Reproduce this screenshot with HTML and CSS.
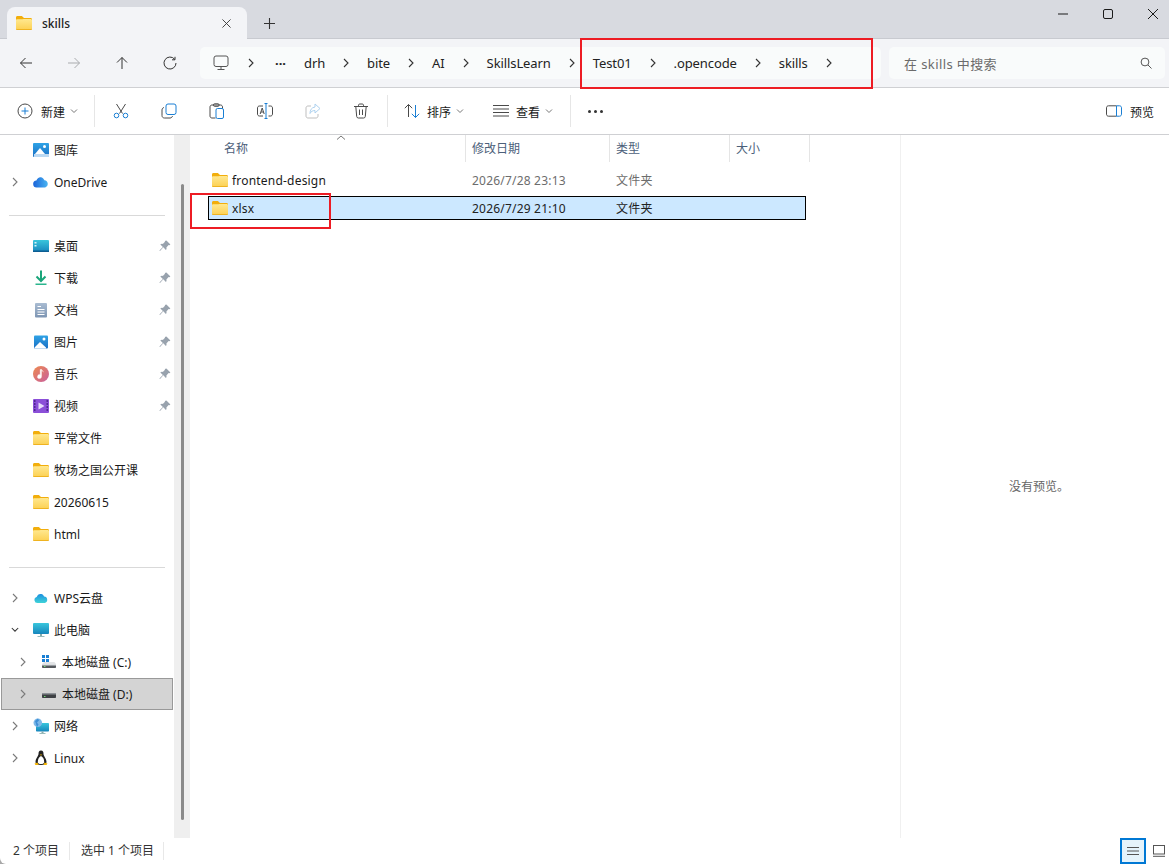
FILE: index.html
```html
<!DOCTYPE html>
<html lang="zh-CN">
<head>
    <meta charset="UTF-8">
    <title>skills</title>
    <link rel="stylesheet" href="styles.css">
</head>
<body>
    <!-- Shared icons -->
    <svg class="svg-defs" aria-hidden="true">
        <defs>
            <linearGradient id="folderFront" x1="0" y1="0" x2="0" y2="1">
                <stop offset="0" stop-color="#ffe88f"/>
                <stop offset="1" stop-color="#fcd052"/>
            </linearGradient>
            <linearGradient id="blueTile" x1="0" y1="0" x2="0" y2="1">
                <stop offset="0" stop-color="#2fa3e6"/>
                <stop offset="1" stop-color="#1a6fc4"/>
            </linearGradient>
            <linearGradient id="tealTile" x1="0" y1="0" x2="0" y2="1">
                <stop offset="0" stop-color="#39c6dc"/>
                <stop offset="1" stop-color="#1786bd"/>
            </linearGradient>
            <linearGradient id="musicTile" x1="0" y1="0" x2="1" y2="1">
                <stop offset="0" stop-color="#ee8a4e"/>
                <stop offset="1" stop-color="#c85f9e"/>
            </linearGradient>
            <linearGradient id="docTile" x1="0" y1="0" x2="0" y2="1">
                <stop offset="0" stop-color="#a9bcd2"/>
                <stop offset="1" stop-color="#7d95b3"/>
            </linearGradient>
            <linearGradient id="cloudBlue" x1="0" y1="0" x2="1" y2="0">
                <stop offset="0" stop-color="#1a63d8"/>
                <stop offset="1" stop-color="#49b4f2"/>
            </linearGradient>
            <linearGradient id="cloudWps" x1="0" y1="0" x2="0" y2="1">
                <stop offset="0" stop-color="#1c8fe0"/>
                <stop offset="1" stop-color="#3fd3d8"/>
            </linearGradient>
        </defs>
        <symbol id="folder" viewBox="0 0 16 14">
            <path d="M0 1.5C0 .7.6 0 1.4 0h4c.4 0 .7.1 1 .4L8 2h6.6c.8 0 1.4.6 1.4 1.4V6H0z" fill="#f2ae0c"/>
            <path d="M0 4.2c0-.5.4-.9.9-.9h5.3L7.6 3h7c.8 0 1.4.6 1.4 1.4v8.2c0 .8-.6 1.4-1.4 1.4H1.4C.6 14 0 13.4 0 12.6z" fill="url(#folderFront)"/>
            <path d="M0 12.4c0 .9.6 1.6 1.4 1.6h13.2c.8 0 1.4-.7 1.4-1.6v-.2c0 .6-.6 1-1.4 1H1.4c-.8 0-1.4-.4-1.4-1z" fill="#eaa90f"/>
        </symbol>
        <symbol id="chev-right" viewBox="0 0 8 10">
            <path d="M2 1l4 4-4 4" fill="none" stroke="currentColor" stroke-width="1.1"/>
        </symbol>
        <symbol id="chev-small" viewBox="0 0 8 6">
            <path d="M1 1.5L4 4.5 7 1.5" fill="none" stroke="currentColor" stroke-width="1"/>
        </symbol>
        <symbol id="pin" viewBox="0 0 12 12">
            <path d="M7.4.6l4 4-1 .7-.8-.2-2.2 2.3c.3 1 .1 1.9-.5 2.5L4.300 7.300 1 11l-.6-.4 3.500-3.500L1.300 4.500c.6-.6 1.500-.8 2.500-.5L6 1.800l-.2-.8z" fill="#98a2ad"/>
        </symbol>
    </svg>

    <div class="window">
        <!-- Tabs -->
        <header class="title-bar">
            <div class="tab">
                <svg class="folder-icon"><use href="#folder"/></svg>
                <span class="tab-title">skills</span>
                <svg class="tab-close" viewBox="0 0 10 10"><path d="M.5.5l9 9M9.500.5l-9 9"/></svg>
            </div>
            <svg class="tab-add" viewBox="0 0 10 10"><path d="M5 0v10M0 5h10"/></svg>
            <div class="window-controls">
                <svg viewBox="0 0 10 10"><path d="M0 5h10"/></svg>
                <svg viewBox="0 0 10 10"><rect x=".5" y=".5" width="9" height="9" rx="1.500"/></svg>
                <svg viewBox="0 0 10 10"><path d="M0 0l10 10M10 0L0 10"/></svg>
            </div>
        </header>

        <!-- Address row -->
        <div class="address-row">
            <div class="nav-buttons">
                <button class="nav-btn"><svg viewBox="0 0 14 14"><path d="M13 7H1.500M6.500 2L1.500 7l5 5"/></svg></button>
                <button class="nav-btn disabled"><svg viewBox="0 0 14 14"><path d="M1 7h11.500M7.500 2l5 5-5 5"/></svg></button>
                <button class="nav-btn"><svg viewBox="0 0 14 14"><path d="M7 13V1.500M2 6.500l5-5 5 5"/></svg></button>
                <button class="nav-btn"><svg viewBox="0 0 14 14"><path d="M11.700 3.300A6 6 0 1 0 13 7M12 .8v3H9"/></svg></button>
            </div>
            <nav class="address-box">
                <svg class="crumb-pc" viewBox="0 0 16 16"><rect x="1" y="1" width="14" height="10.500" rx="2"/><path d="M8 11.500v3M4.500 14.500h7"/></svg>
                <svg class="crumb-sep first"><use href="#chev-right"/></svg>
                <span class="crumb-more">···</span>
                <span class="crumb first-crumb">drh</span>
                <svg class="crumb-sep"><use href="#chev-right"/></svg>
                <span class="crumb">bite</span>
                <svg class="crumb-sep"><use href="#chev-right"/></svg>
                <span class="crumb">AI</span>
                <svg class="crumb-sep"><use href="#chev-right"/></svg>
                <span class="crumb">SkillsLearn</span>
                <svg class="crumb-sep"><use href="#chev-right"/></svg>
                <span class="crumb">Test01</span>
                <svg class="crumb-sep"><use href="#chev-right"/></svg>
                <span class="crumb">.opencode</span>
                <svg class="crumb-sep"><use href="#chev-right"/></svg>
                <span class="crumb">skills</span>
                <svg class="crumb-sep"><use href="#chev-right"/></svg>
            </nav>
            <div class="search-box">
                <span>在 skills 中搜索</span>
                <svg viewBox="0 0 12 12"><circle cx="5" cy="5" r="3.900"/><path d="M8 8l3.500 3.500"/></svg>
            </div>
        </div>

        <!-- Command bar -->
        <div class="command-bar">
            <button class="cmd cmd-new">
                <svg class="cmd-icon" viewBox="0 0 16 16"><circle class="gray" cx="8" cy="8" r="7"/><path class="blue" d="M8 4.500v7M4.500 8h7"/></svg>
                <span>新建</span>
                <svg class="cmd-caret"><use href="#chev-small"/></svg>
            </button>
            <span class="cmd-sep"></span>
            <button class="cmd cmd-square"><svg class="cmd-icon" viewBox="0 0 16 16"><path class="gray" d="M3.500 1l6 9.500M12.500 1l-6 9.500"/><circle class="blue" cx="3.500" cy="12.500" r="2.300"/><circle class="blue" cx="12.500" cy="12.500" r="2.300"/></svg></button>
            <button class="cmd cmd-square"><svg class="cmd-icon" viewBox="0 0 16 16"><path class="gray" d="M3 4.500C1.800 4.800 1 5.600 1 7v5.500C1 14 2 15 3.500 15H9c1.300 0 2.200-.8 2.500-2"/><rect class="blue" x="5" y="1" width="10" height="10.500" rx="2"/></svg></button>
            <button class="cmd cmd-square"><svg class="cmd-icon" viewBox="0 0 16 16"><path class="gray" d="M6.500 15H3c-1.200 0-2-.8-2-2V4c0-1.200.8-2 2-2h8.500c1.200 0 2 .8 2 2v1.500"/><rect class="gray" x="4.500" y=".8" width="5.500" height="2.500" rx="1"/><rect class="blue" x="7" y="5.500" width="7.500" height="10" rx="1.500"/></svg></button>
            <button class="cmd cmd-square"><svg class="cmd-icon" viewBox="0 0 16 16"><path class="gray" d="M6 3H2.500C1.300 3 .5 3.800 .5 5v6c0 1.200.8 2 2 2H6M11.500 3h2c1.200 0 2 .8 2 2v6c0 1.200-.8 2-2 2h-2"/><path class="blue" d="M7.500.5h3M9 .5v15M7.500 15.500h3"/><path class="gray" d="M3.200 11l2-6 2 6M3.900 9h2.600"/></svg></button>
            <button class="cmd cmd-square"><svg class="cmd-icon faded" viewBox="0 0 16 16"><path class="gray" d="M6 3H3c-1.200 0-2 .8-2 2v8c0 1.200.8 2 2 2h8c1.200 0 2-.8 2-2v-2"/><path class="blue" d="M10 1l5 4.500-5 4.500V7.500c-2.500 0-4 1-5 3 0-3.500 1.500-6 5-6.500z"/></svg></button>
            <button class="cmd cmd-square"><svg class="cmd-icon" viewBox="0 0 16 16"><path class="gray" d="M1 3.500h14M5.500 3.500V2.200c0-.7.5-1.200 1.200-1.200h2.600c.7 0 1.200.5 1.200 1.200v1.300M2.800 3.500l.9 10c.1.900.7 1.500 1.600 1.500h5.400c.9 0 1.500-.6 1.600-1.500l.9-10M6.500 6.500v5.500M9.500 6.500v5.500"/></svg></button>
            <span class="cmd-sep sep-after-delete"></span>
            <button class="cmd cmd-sort">
                <svg class="cmd-icon" viewBox="0 0 16 16"><path class="gray" d="M4.500 14V1.500M.8 5.200l3.700-3.700 3.700 3.700"/><path class="blue" d="M11.500 2v12.500M7.800 10.800l3.700 3.700 3.700-3.700"/></svg>
                <span>排序</span>
                <svg class="cmd-caret"><use href="#chev-small"/></svg>
            </button>
            <button class="cmd cmd-view">
                <svg class="cmd-icon" viewBox="0 0 16 16"><path class="gray" d="M0 2.500h16M0 6h16M0 9.500h16M0 13h16"/></svg>
                <span>查看</span>
                <svg class="cmd-caret"><use href="#chev-small"/></svg>
            </button>
            <span class="cmd-sep"></span>
            <button class="cmd cmd-more"><i></i><i></i><i></i></button>
            <button class="cmd cmd-preview">
                <svg class="cmd-icon" viewBox="0 0 16 12"><path class="gray" d="M10.500.8H2.500C1.300.8.500 1.600.500 2.800v6.400c0 1.200.8 2 2 2h8"/><path class="blue" d="M10.500.8h3c1.200 0 2 .8 2 2v6.400c0 1.200-.8 2-2 2h-3z"/></svg>
                <span>预览</span>
            </button>
        </div>

        <div class="content">
            <!-- Sidebar -->
            <aside class="sidebar">
                <ul class="tree">
                    <li class="tree-row">
                        <span class="twisty"></span>
                        <svg class="tree-icon" viewBox="0 0 16 16"><rect y="1" width="16" height="14" rx="1" fill="url(#blueTile)"/><circle cx="11.500" cy="4.500" r="1.500" fill="#fff"/><path d="M2 12l5-6 5 6z" fill="#fff"/><rect x="1" y="12" width="15" height="3" fill="#bcd9f2"/></svg>
                        <span>图库</span>
                    </li>
                    <li class="tree-row">
                        <svg class="twisty"><use href="#chev-right"/></svg>
                        <svg class="tree-icon" viewBox="0 0 16 16"><path d="M4 13.500a3.500 3.500 0 0 1-.6-7C4.300 4 6.500 2.500 8.800 3.500c1.300.5 2.200 1.600 2.600 2.800a3.700 3.700 0 0 1 .8 7.200z" fill="url(#cloudBlue)"/></svg>
                        <span>OneDrive</span>
                    </li>
                    <li class="tree-divider"></li>
                    <li class="tree-row">
                        <span class="twisty"></span>
                        <svg class="tree-icon" viewBox="0 0 16 16"><rect y="2" width="16" height="12" rx="1" fill="url(#tealTile)"/><rect x="1.500" y="4" width="2" height="1.500" fill="#d5f3fa"/><rect x="1.500" y="7" width="2" height="1.500" fill="#d5f3fa"/><rect y="12.500" width="16" height="1.500" fill="#0d5d92"/></svg>
                        <span>桌面</span>
                        <svg class="pin"><use href="#pin"/></svg>
                    </li>
                    <li class="tree-row">
                        <span class="twisty"></span>
                        <svg class="tree-icon" viewBox="0 0 16 16"><path d="M8 .5v10M3.500 6.500L8 11l4.500-4.500" fill="none" stroke="#1aa57a" stroke-width="2"/><rect x="2.500" y="13.500" width="11" height="1.500" fill="#2bb58d"/></svg>
                        <span>下载</span>
                        <svg class="pin"><use href="#pin"/></svg>
                    </li>
                    <li class="tree-row">
                        <span class="twisty"></span>
                        <svg class="tree-icon" viewBox="0 0 16 16"><rect x="2" y="1" width="12" height="14.500" rx="1" fill="url(#docTile)"/><path d="M4.500 4.500h3.500M4.500 7.500h7M4.500 10h7M4.500 12.500h7" stroke="#fff" stroke-width="1.100"/></svg>
                        <span>文档</span>
                        <svg class="pin"><use href="#pin"/></svg>
                    </li>
                    <li class="tree-row">
                        <span class="twisty"></span>
                        <svg class="tree-icon" viewBox="0 0 16 16"><rect x="1" y="1.500" width="14" height="13" rx="1" fill="url(#blueTile)"/><circle cx="11" cy="5" r="1.500" fill="#fff"/><path d="M1.500 13.500L7 8l6 5.500v1H2z" fill="#fff"/></svg>
                        <span>图片</span>
                        <svg class="pin"><use href="#pin"/></svg>
                    </li>
                    <li class="tree-row">
                        <span class="twisty"></span>
                        <svg class="tree-icon" viewBox="0 0 16 16"><circle cx="8" cy="8" r="8" fill="url(#musicTile)"/><path d="M8.500 3.500v7a2 2 0 1 1-1.300-1.800V3.500zM8.500 3.500c.3 1.500 1.500 2 2.300 2.500" fill="#fff" stroke="#fff" stroke-width=".4"/></svg>
                        <span>音乐</span>
                        <svg class="pin"><use href="#pin"/></svg>
                    </li>
                    <li class="tree-row">
                        <span class="twisty"></span>
                        <svg class="tree-icon" viewBox="0 0 16 16"><rect y="1" width="16" height="14" rx="1" fill="#8b4fd8"/><path d="M1 3h1.500M1 6h1.500M1 9h1.500M1 12h1.500M13.500 3H15M13.500 6H15M13.500 9H15M13.500 12H15" stroke="#3c1d78" stroke-width="1.300"/><path d="M5.500 4.500v7l6-3.500z" fill="#e6dbfa"/></svg>
                        <span>视频</span>
                        <svg class="pin"><use href="#pin"/></svg>
                    </li>
                    <li class="tree-row">
                        <span class="twisty"></span>
                        <svg class="tree-icon folder-small"><use href="#folder"/></svg>
                        <span>平常文件</span>
                    </li>
                    <li class="tree-row">
                        <span class="twisty"></span>
                        <svg class="tree-icon folder-small"><use href="#folder"/></svg>
                        <span>牧场之国公开课</span>
                    </li>
                    <li class="tree-row">
                        <span class="twisty"></span>
                        <svg class="tree-icon folder-small"><use href="#folder"/></svg>
                        <span>20260615</span>
                    </li>
                    <li class="tree-row">
                        <span class="twisty"></span>
                        <svg class="tree-icon folder-small"><use href="#folder"/></svg>
                        <span>html</span>
                    </li>
                    <li class="tree-divider"></li>
                    <li class="tree-row">
                        <svg class="twisty"><use href="#chev-right"/></svg>
                        <svg class="tree-icon" viewBox="0 0 16 16"><path d="M4.500 13a3 3 0 0 1-.8-5.900C4.300 4.800 6.200 3.500 8.300 4c1.400.3 2.400 1.300 2.800 2.500a3.300 3.300 0 0 1 .6 6.500z" fill="url(#cloudWps)"/></svg>
                        <span>WPS云盘</span>
                    </li>
                    <li class="tree-row">
                        <svg class="twisty open" viewBox="0 0 10 8"><path d="M1 1.500l4 4 4-4" fill="none" stroke="currentColor" stroke-width="1.300"/></svg>
                        <svg class="tree-icon" viewBox="0 0 16 16"><rect y="1" width="16" height="11" rx="1" fill="url(#tealTile)"/><rect x="7" y="12" width="2" height="2" fill="#8aa"/><rect x="4.500" y="14" width="7" height="1" fill="#9bb"/></svg>
                        <span>此电脑</span>
                    </li>
                    <li class="tree-row nested">
                        <svg class="twisty"><use href="#chev-right"/></svg>
                        <svg class="tree-icon" viewBox="0 0 16 16"><path d="M1 1h3v3H1zM5 1h3v3H5zM1 5h3v3H1zM5 5h3v3H5z" fill="#1a7fd4"/><path d="M1 9.500l2-1h10.500l1.500 1z" fill="#c8ccd0"/><rect x="1" y="10" width="14" height="4" rx=".8" fill="#55595e"/><rect x="1" y="10" width="14" height="1.500" fill="#dcdfe2"/><rect x="3" y="12" width="1.500" height="1" fill="#6fe06f"/></svg>
                        <span>本地磁盘 (C:)</span>
                    </li>
                    <li class="tree-row nested selected">
                        <svg class="twisty"><use href="#chev-right"/></svg>
                        <svg class="tree-icon" viewBox="0 0 16 16"><rect x="1" y="7" width="14" height="5" rx=".8" fill="#3d4044"/><rect x="1" y="7" width="14" height="1.500" fill="#8d9196"/><rect x="3" y="10" width="1.500" height="1" fill="#6fe06f"/></svg>
                        <span>本地磁盘 (D:)</span>
                    </li>
                    <li class="tree-row">
                        <svg class="twisty"><use href="#chev-right"/></svg>
                        <svg class="tree-icon" viewBox="0 0 16 16"><rect x="3" y="5" width="13" height="8.500" rx=".8" fill="url(#tealTile)"/><rect x="8.500" y="13.500" width="2" height="1.500" fill="#8aa"/><rect x="6.500" y="15" width="6" height="1" fill="#9bb"/><circle cx="4.800" cy="4.800" r="4.300" fill="#7db8e8"/><path d="M2 3c1.500-1 2-2 3-2.500l1 2-2 2 1.500 2L4 9" fill="#3f8fd6"/></svg>
                        <span>网络</span>
                    </li>
                    <li class="tree-row">
                        <svg class="twisty"><use href="#chev-right"/></svg>
                        <svg class="tree-icon" viewBox="0 0 16 16"><path d="M8 .5c2 0 2.500 1.500 2.500 3.500 0 2 3 4.500 3 8 0 2-2 3-5.500 3s-5.500-1-5.500-3c0-3.500 3-6 3-8 0-2 .5-3.500 2.500-3.500z" fill="#222"/><path d="M8 6c2 .8 3.200 3.500 3.200 6 0 1.500-1.300 2-3.200 2s-3.200-.5-3.200-2c0-2.500 1.200-5.200 3.200-6z" fill="#fff"/><path d="M6.800 4.500h2.400L8 5.800z" fill="#f4b400"/><path d="M1.500 13.500l3-1 1 2.500H2.500zM14.500 13.500l-3-1-1 2.500h3z" fill="#f4b400"/></svg>
                        <span>Linux</span>
                    </li>
                </ul>
            </aside>
            <div class="scroll-track"><div class="scroll-thumb"></div></div>

            <!-- File list -->
            <main class="file-pane">
                <div class="list-header">
                    <div class="col-head name-head">名称<svg class="sort-caret" viewBox="0 0 10 5"><path d="M1 4.500L5 1l4 3.500"/></svg></div>
                    <div class="col-head">修改日期</div>
                    <div class="col-head">类型</div>
                    <div class="col-head">大小</div>
                </div>
                <div class="file-list">
                    <div class="file-row">
                        <div class="file-name"><svg class="folder-icon"><use href="#folder"/></svg>frontend-design</div>
                        <div class="file-cell">2026/7/28 23:13</div>
                        <div class="file-cell">文件夹</div>
                    </div>
                    <div class="file-row active">
                        <div class="file-name"><svg class="folder-icon"><use href="#folder"/></svg>xlsx</div>
                        <div class="file-cell">2026/7/29 21:10</div>
                        <div class="file-cell">文件夹</div>
                    </div>
                </div>
            </main>

            <!-- Preview pane -->
            <section class="preview-pane">没有预览。</section>
        </div>

        <!-- Status bar -->
        <footer class="status-bar">
            <span class="status-item first-status">2 个项目</span>
            <span class="status-item">选中 1 个项目</span>
            <div class="view-switch">
                <button class="view-btn active"><svg viewBox="0 0 12 10"><path d="M0 1.500h12M0 5h12M0 8.500h12"/></svg></button>
                <button class="view-btn"><svg viewBox="0 0 12 12"><rect x=".5" y=".5" width="11" height="8.500"/><path d="M0 11.300h12"/></svg></button>
            </div>
        </footer>
    </div>

    <!-- Red annotation boxes drawn over the screenshot -->
    <div class="mark mark-path"></div>
    <div class="mark mark-row"></div>
</body>
</html>
```

FILE: styles.css
```css
:root {
    --chrome: #d8dae0;
    --toolbar: #f3f4f7;
    --field: #f9fbfb;
    --line: #cfd0d3;
    --blue: #1a7fd4;
    --text: #1a1a1a;
    --mark: #ed1c24;
}

* {
    margin: 0;
    padding: 0;
    box-sizing: border-box;
}

html, body {
    height: 100%;
    overflow: hidden;
}

body {
    background: #a8a8a8;
    color: var(--text);
    font-family: "Noto Sans", "Noto Sans CJK SC", sans-serif;
    font-size: 12px;
}

button {
    border: none;
    background: none;
    color: inherit;
    font: inherit;
}

.svg-defs {
    position: absolute;
    width: 0;
    height: 0;
}

.window {
    display: flex;
    flex-direction: column;
    height: 864px;
    background: #fff;
    border-bottom-left-radius: 6px;
    overflow: hidden;
}

.folder-icon {
    width: 16px;
    height: 14px;
    flex: none;
}

/* Tabs */
.title-bar {
    display: flex;
    align-items: flex-start;
    height: 39px;
    flex: none;
    padding: 7px 0 0 7px;
    background: var(--chrome);
    border-bottom: 1px solid #c8cad0;
}

.tab {
    display: flex;
    align-items: center;
    width: 240px;
    height: 32px;
    padding: 0 16px 0 9px;
    background: var(--toolbar);
    border-radius: 8px 8px 0 0;
}

.tab-title {
    margin-left: 10px;
    font-weight: 500;
    color: #222;
}

.tab-close {
    width: 9px;
    height: 9px;
    margin-left: auto;
    fill: none;
    stroke: #333;
}

.tab-add {
    width: 11px;
    height: 11px;
    margin: 11px 0 0 17px;
    fill: none;
    stroke: #333;
}

.window-controls {
    display: flex;
    gap: 35px;
    margin: 2px 11px 0 auto;
}

.window-controls svg {
    width: 10px;
    height: 10px;
    fill: none;
    stroke: #1a1a1a;
}

/* Address row */
.address-row {
    display: flex;
    align-items: center;
    gap: 8px;
    height: 49px;
    flex: none;
    padding-right: 4px;
    background: var(--toolbar);
    border-bottom: 1px solid var(--line);
}

.nav-buttons {
    display: flex;
    width: 192px;
    padding-left: 2px;
}

.nav-btn {
    display: flex;
    align-items: center;
    justify-content: center;
    width: 48px;
    height: 32px;
    flex: none;
}

.nav-btn svg {
    width: 14px;
    height: 14px;
    fill: none;
    stroke: #333;
    stroke-width: 1;
}

.nav-btn.disabled svg {
    stroke: #a9abae;
}

.address-box {
    display: flex;
    align-items: center;
    width: 681px;
    height: 32px;
    padding-left: 13px;
    background: var(--field);
    border-radius: 5px;
    font-size: 13px;
    letter-spacing: -.1px;
    color: #222;
}

.crumb-pc {
    width: 16px;
    height: 16px;
    fill: none;
    stroke: #555;
}

.crumb-sep {
    width: 42px;
    height: 10px;
    flex: none;
    color: #333;
}

.crumb-sep.first {
    width: 44px;
}

.crumb-more {
    width: 14px;
    margin-left: 2px;
    font-weight: 700;
    line-height: 1;
    letter-spacing: 0;
}

.first-crumb {
    margin-left: 15px;
}

.search-box {
    display: flex;
    align-items: center;
    justify-content: space-between;
    width: 276px;
    height: 32px;
    padding: 0 13px 0 15px;
    background: var(--field);
    border-radius: 5px;
    font-size: 13px;
    letter-spacing: .4px;
    color: #6b6b6b;
}

.search-box svg {
    width: 12px;
    height: 12px;
    fill: none;
    stroke: #555;
}

/* Command bar */
.command-bar {
    display: flex;
    align-items: center;
    height: 47px;
    flex: none;
    padding-left: 8px;
    border-bottom: 1px solid var(--line);
}

.cmd {
    display: flex;
    align-items: center;
    height: 32px;
}

.cmd span {
    padding-top: 2px;
}

.cmd-icon {
    width: 16px;
    height: 16px;
    flex: none;
    fill: none;
    stroke-width: 1;
}

.cmd-icon .gray {
    stroke: #4a4a4a;
}

.cmd-icon .blue {
    stroke: var(--blue);
}

.cmd-icon.faded {
    opacity: .35;
}

.cmd-caret {
    width: 8px;
    height: 6px;
    color: #777;
}

.cmd-sep {
    width: 1px;
    height: 32px;
    background: #e6e6e6;
}

.cmd-new {
    width: 86px;
    padding-left: 9px;
}

.cmd-new span {
    margin: 0 5px 0 8px;
}

.cmd-square {
    justify-content: center;
    width: 48px;
}

.cmd-sep + .cmd-square {
    margin-left: 2px;
}

.sep-after-delete {
    margin-left: 2px;
}

.cmd-sort {
    width: 89px;
    margin-left: 16px;
}

.cmd-sort span,
.cmd-view span {
    margin: 0 5px 0 7px;
}

.cmd-view {
    width: 77px;
}

.cmd-more {
    gap: 3px;
    margin-left: 17px;
}

.cmd-more i {
    width: 3px;
    height: 3px;
    background: #333;
    border-radius: 50%;
}

.cmd-preview {
    margin-left: auto;
    margin-right: 15px;
}

.cmd-preview .cmd-icon {
    height: 12px;
}

.cmd-preview span {
    margin-left: 8px;
}

/* Body */
.content {
    display: flex;
    flex: 1;
    min-height: 0;
}

.sidebar {
    width: 174px;
    flex: none;
    overflow: hidden;
}

.tree {
    list-style: none;
    margin-top: -1px;
}

.tree-row {
    display: flex;
    align-items: center;
    height: 32px;
    padding-left: 11px;
}

.tree-row.nested {
    padding-left: 19px;
}

.tree-row.selected {
    margin: 0 1px;
    padding-left: 17px;
    background: #d4d4d4;
    border: 1px solid #999;
}

.twisty {
    width: 8px;
    height: 10px;
    flex: none;
    color: #7a7a7a;
}

.twisty.open {
    color: #333;
}

.tree-icon {
    width: 16px;
    height: 16px;
    flex: none;
    margin: 0 5px 0 14px;
}

.folder-small {
    height: 14px;
}

.pin {
    width: 12px;
    height: 12px;
    margin-left: auto;
    margin-right: 3px;
}

.tree-divider {
    display: flex;
    align-items: center;
    height: 32px;
    padding: 2px 9px 0;
}

.tree-divider::before {
    content: "";
    flex: 1;
    height: 1px;
    background: #d9d9d9;
}

.scroll-track {
    width: 16px;
    flex: none;
    padding: 49px 0 0 7px;
    background: #efefef;
}

.scroll-thumb {
    width: 3px;
    height: 636px;
    background: #8a8a8a;
    border-radius: 2px;
}

/* File list */
.file-pane {
    width: 710px;
    flex: none;
}

.list-header {
    display: grid;
    grid-template-columns: 276px 144px 120px 80px;
    height: 27px;
}

.col-head {
    display: flex;
    align-items: center;
    padding: 0 0 1px 6px;
    color: #4c607a;
    border-right: 1px solid #e5e5e5;
}

.name-head {
    position: relative;
    padding-left: 34px;
}

.sort-caret {
    position: absolute;
    top: 0;
    left: 146px;
    width: 10px;
    height: 5px;
    fill: none;
    stroke: #777;
}

.file-list {
    display: flex;
    flex-direction: column;
    gap: 4px;
    padding: 6px 0 0 18px;
}

.file-row {
    display: grid;
    grid-template-columns: 258px 144px 1fr;
    align-items: center;
    width: 598px;
    height: 24px;
    border: 1px solid transparent;
}

.file-row.active {
    background: #cce8ff;
    border-color: #000;
}

.file-name {
    display: flex;
    align-items: center;
    gap: 4px;
    padding-left: 3px;
    letter-spacing: .2px;
}

.file-cell {
    padding-left: 5px;
    letter-spacing: .2px;
    color: #6d6d6d;
}

.file-row.active .file-cell {
    color: #222;
}

/* Preview */
.preview-pane {
    display: flex;
    flex: 1;
    align-items: center;
    justify-content: center;
    padding: 0 0 2px 8px;
    border-left: 1px solid #f0f0f0;
    color: #666;
}

/* Status bar */
.status-bar {
    display: flex;
    align-items: center;
    height: 26px;
    flex: none;
    padding-left: 13px;
    color: #333;
}

.status-item {
    height: 18px;
    padding-right: 9px;
    line-height: 18px;
    border-right: 1px solid #e8e8e8;
}

.first-status {
    margin-right: 11px;
    padding-right: 10px;
}

.view-switch {
    display: flex;
    align-items: center;
    margin-left: auto;
}

.view-btn {
    display: flex;
    align-items: center;
    justify-content: center;
    width: 23px;
    height: 26px;
    padding-left: 2px;
}

.view-btn.active {
    width: 26px;
    padding-left: 0;
    background: #e5f3fb;
    border: 2px solid #0078d4;
}

.view-btn svg {
    width: 12px;
    height: 12px;
    fill: none;
    stroke: #555;
}

/* Annotations */
.mark {
    position: absolute;
    border: 2px solid var(--mark);
}

.mark-path {
    top: 38px;
    left: 580px;
    width: 293px;
    height: 51px;
}

.mark-row {
    top: 193px;
    left: 190px;
    width: 141px;
    height: 36px;
}
```
